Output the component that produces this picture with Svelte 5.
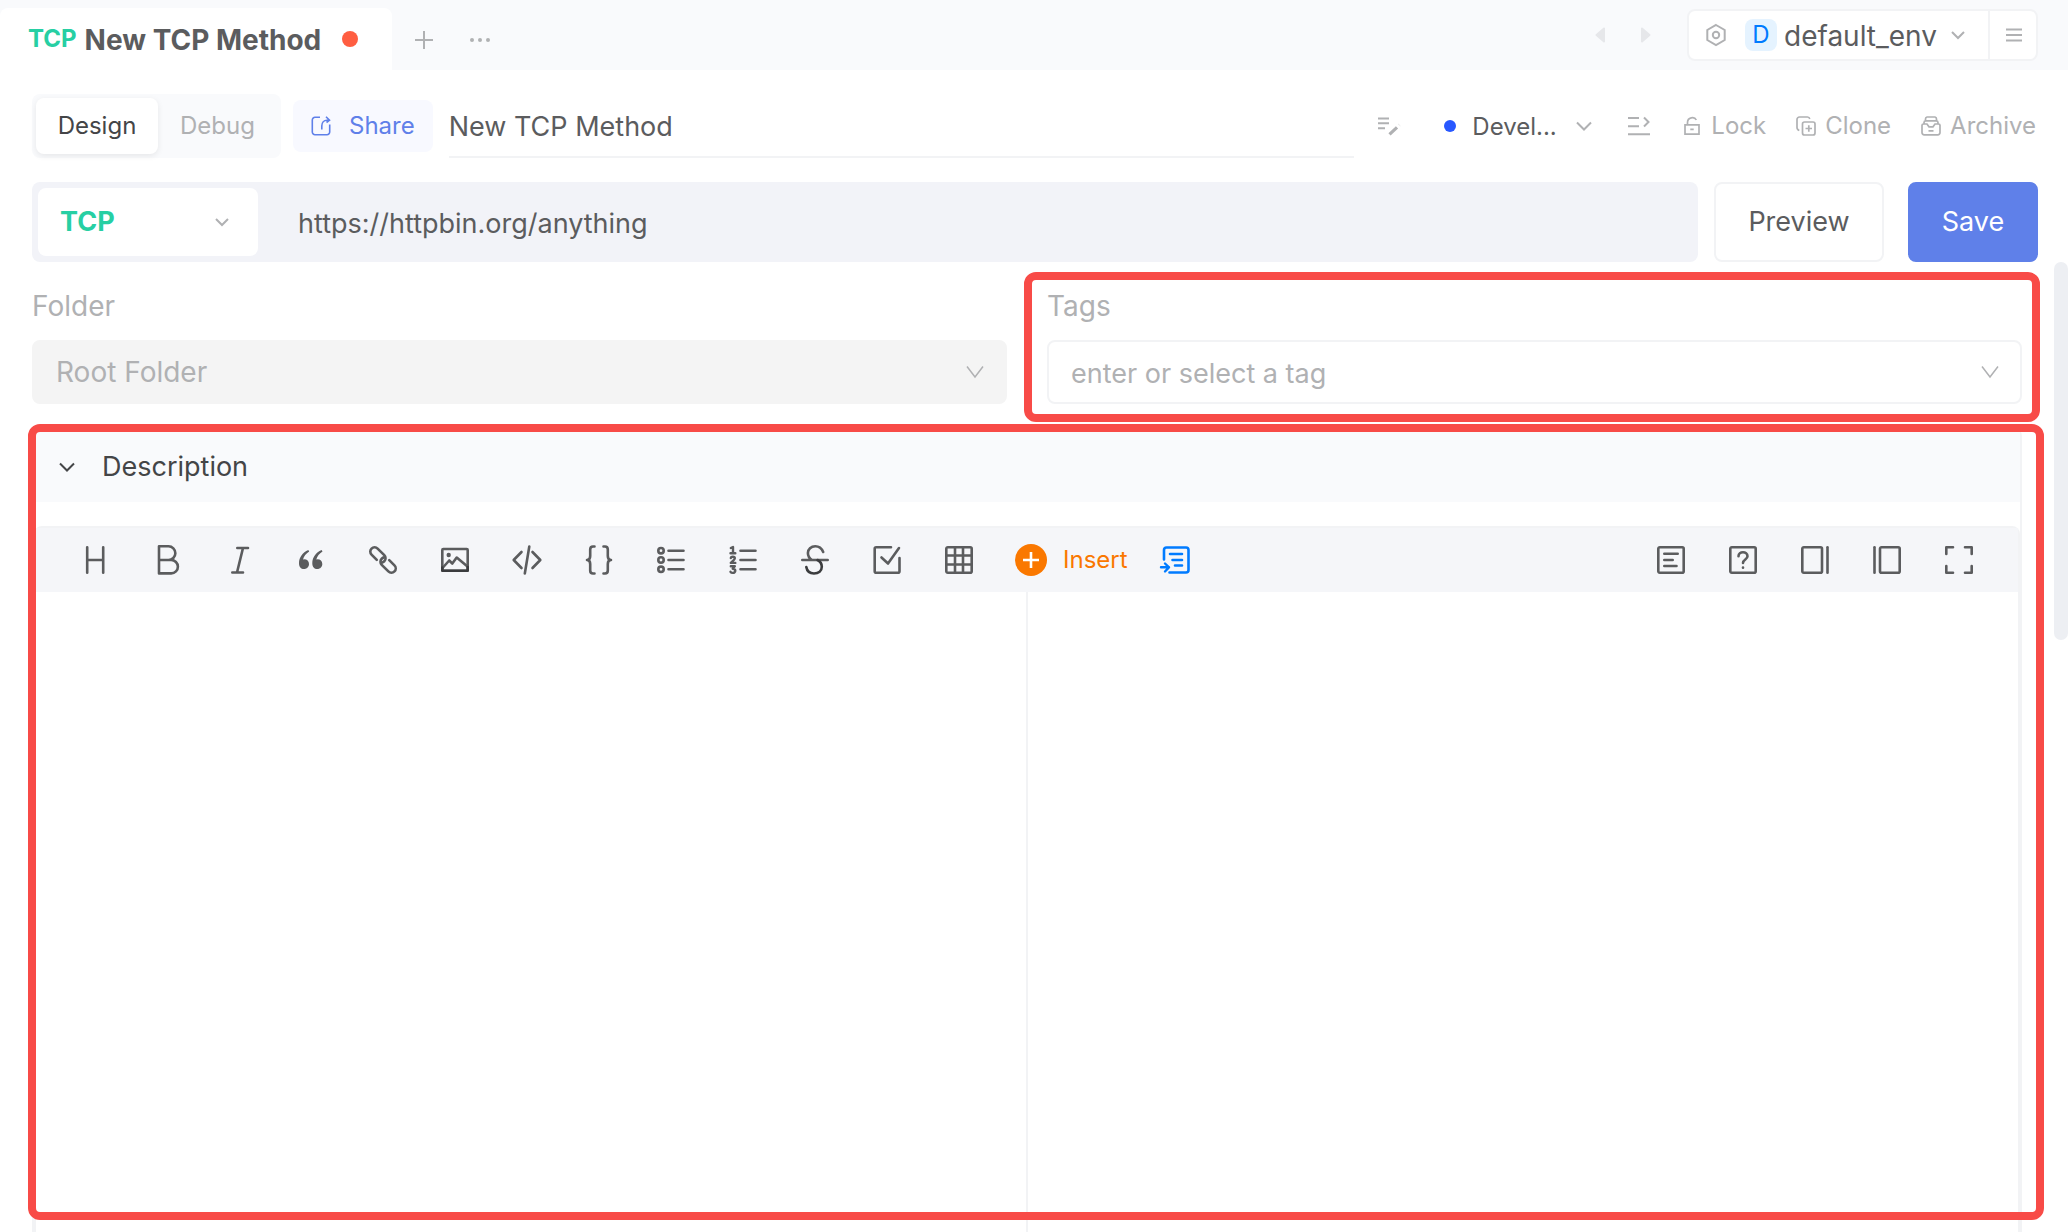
<script lang="ts">
  let mode: string = 'design';
  let name: string = 'New TCP Method';
  let url: string = 'https://httpbin.org/anything';
  let tag: string = '';
  let open: boolean = true;

  const tools = [
    { id: 'heading', label: 'Heading' },
    { id: 'bold', label: 'Bold' },
    { id: 'italic', label: 'Italic' },
    { id: 'quote', label: 'Quote' },
    { id: 'link', label: 'Link' },
    { id: 'image', label: 'Image' },
    { id: 'code', label: 'Code' },
    { id: 'braces', label: 'Code block' },
    { id: 'ul', label: 'Unordered list' },
    { id: 'ol', label: 'Ordered list' },
    { id: 'strike', label: 'Strikethrough' },
    { id: 'task', label: 'Task list' },
    { id: 'table', label: 'Table' },
  ];

  const viewTools = [
    { id: 'toc', label: 'Table of contents' },
    { id: 'help', label: 'Help' },
    { id: 'write', label: 'Write only' },
    { id: 'preview', label: 'Preview only' },
    { id: 'fullscreen', label: 'Fullscreen' },
  ];

  const actions = [
    { id: 'lock', label: 'Lock' },
    { id: 'clone', label: 'Clone' },
    { id: 'archive', label: 'Archive' },
  ];
</script>

<div class="page">
  <header class="tabs">
    <div class="tab">
      <span class="tab-method">TCP</span>
      <span class="tab-name">New TCP Method</span>
      <span class="tab-dot"></span>
    </div>
    <button class="plain tab-add" aria-label="New tab">
      <svg width="20" height="20" viewBox="0 0 20 20"><path d="M10 1V19M1 10H19" /></svg>
    </button>
    <button class="plain tab-more" aria-label="More">
      <svg width="20" height="20" viewBox="0 0 20 20">
        <g fill="currentColor" stroke="none">
          <circle cx="2" cy="10" r="2" /><circle cx="10" cy="10" r="2" /><circle cx="18" cy="10" r="2" />
        </g>
      </svg>
    </button>
    <div class="tabs-right">
      <button class="plain arrow" aria-label="Back">
        <svg width="10" height="16" viewBox="0 0 10 16"><path d="M9 1.5V14.5L1.5 8Z" /></svg>
      </button>
      <button class="plain arrow" aria-label="Forward">
        <svg width="10" height="16" viewBox="0 0 10 16"><path d="M1 1.5V14.5L8.5 8Z" /></svg>
      </button>
      <div class="env">
        <div class="env-main">
          <svg width="20" height="24" viewBox="0 0 20 24">
            <path d="M10 2L18.7 7V17L10 22L1.3 17V7Z" /><circle cx="10" cy="12" r="3.2" />
          </svg>
          <span class="env-badge">D</span>
          <select class="env-select" aria-label="Environment"><option>default_env</option></select>
          <svg class="chevron" width="16" height="10" viewBox="0 0 16 10"><path d="M2 2L8 8L14 2" /></svg>
        </div>
        <button class="plain env-menu" aria-label="Menu">
          <svg width="16" height="14" viewBox="0 0 16 14"><path d="M0 1.5H16M0 7H16M0 12.5H16" /></svg>
        </button>
      </div>
    </div>
  </header>

  <main>
    <div class="row title-row">
      <div class="segment">
        <button class:active={mode === 'design'} on:click={() => (mode = 'design')}>Design</button>
        <button class:active={mode === 'debug'} on:click={() => (mode = 'debug')}>Debug</button>
      </div>
      <button class="share">
        <svg width="20" height="20" viewBox="0 0 20 20">
          <path d="M9 1.3H4A2.7 2.7 0 0 0 1.3 4V16A2.7 2.7 0 0 0 4 18.7H16A2.7 2.7 0 0 0 18.7 16V8.5M10.8 13.5V10C10.8 6.5 13 4.2 16 4.2H18M15 .8L18.5 4.2L15.5 6.5" />
        </svg>
        Share
      </button>
      <input class="name" aria-label="Name" bind:value={name} />
      <button class="plain edit" aria-label="Edit name">
        <svg width="24" height="20" viewBox="0 0 24 20">
          <path d="M1 2.5H12M1 7.3H12M1 12.2H8" />
          <path d="M12.500 18.3L20 11.3M22.3 9.2L22.5 9" stroke-width="3.2" />
        </svg>
      </button>
      <div class="status">
        <span class="status-dot"></span>
        <select class="status-select" aria-label="Status"><option>Devel...</option></select>
        <svg class="chevron" width="18" height="12" viewBox="0 0 18 12"><path d="M2 2.5L9 9.5L16 2.5" /></svg>
      </div>
      <button class="plain sort" aria-label="Sort">
        <svg width="22" height="20" viewBox="0 0 22 20">
          <path d="M0 2H11M0 10.3H11M0 18.3H22M16 1.5L20.5 6L16 10.5" />
        </svg>
      </button>
      <div class="actions">
        {#each actions as action}
          <button class="plain action">
            <svg width="20" height="20" viewBox="0 0 20 20">
              {#if action.id === 'lock'}
                <path d="M3 8.8H17V18.2H3ZM5.5 8.5V6.5C5.5 1.2 12.5 .2 14.3 4M8.3 13.3H11.7" />
              {:else if action.id === 'clone'}
                <rect x="6.5" y="6" width="12.5" height="13" rx="2" />
                <path d="M12.8 9.3V15.7M9.5 12.5H16M3.3 14.5C1.8 14 1 13 1 11.5V3.5A2.5 2.5 0 0 1 3.5 1H11.5C13 1 13.5 1.8 13.8 3" />
              {:else}
                <path d="M4.5 4.8V3A2 2 0 0 1 6 1H14A2 2 0 0 1 15.5 3V4.8M3 8V6.5A1.7 1.7 0 0 1 4.7 4.9H15.3A1.7 1.7 0 0 1 17 6.5V8M1 9.3Q1 8 2.5 8H6L8 10.8H12L14 8H17.5Q19 8 19 9.3V16.5A2.2 2.2 0 0 1 16.8 18.8H3.2A2.2 2.2 0 0 1 1 16.5ZM7.5 14.8H12.5" />
              {/if}
            </svg>
            {action.label}
          </button>
        {/each}
      </div>
    </div>

    <div class="row url-row">
      <div class="url-bar">
        <div class="method">
          <select aria-label="Method"><option>TCP</option></select>
          <svg class="chevron" width="16" height="10" viewBox="0 0 16 10"><path d="M2 2L8 8L14 2" /></svg>
        </div>
        <input class="url" aria-label="URL" bind:value={url} />
      </div>
      <button class="btn">Preview</button>
      <button class="btn btn-save">Save</button>
    </div>

    <div class="fields">
      <div class="field">
        <label for="folder">Folder</label>
        <div class="box box-disabled">
          <select id="folder" disabled><option>Root Folder</option></select>
          <svg class="chevron thin" width="18" height="14" viewBox="0 0 18 14"><path d="M1 1.5L9 12L17 1.5" /></svg>
        </div>
      </div>
      <div class="field marked">
        <label for="tags">Tags</label>
        <div class="box">
          <input id="tags" placeholder="enter or select a tag" bind:value={tag} />
          <svg class="chevron thin" width="18" height="14" viewBox="0 0 18 14"><path d="M1 1.5L9 12L17 1.5" /></svg>
        </div>
      </div>
    </div>

    <section class="panel marked">
      <button class="panel-head" aria-expanded={open} on:click={() => (open = !open)}>
        <svg width="18" height="12" viewBox="0 0 18 12"><path d="M2 2.5L9 9.5L16 2.5" /></svg>
        Description
      </button>
      {#if open}
        <div class="editor">
          <div class="toolbar">
            {#each tools as tool}
              <button class="plain tool" aria-label={tool.label}>
                <svg width="32" height="32" viewBox="0 0 32 32">
                  {#if tool.id === 'heading'}
                    <path d="M8.2 3.3V28.7M24.2 3.3V28.7M8.2 16H24.2" />
                  {:else if tool.id === 'bold'}
                    <path d="M8 2.3H17.5A6.8 6.8 0 0 1 17.5 16H8ZM8 16H20.2A6.7 6.7 0 0 1 20.2 29.4H8Z" />
                  {:else if tool.id === 'italic'}
                    <path d="M14.3 4H25M9.3 28.5H20M20 4L14 28.5" />
                  {:else if tool.id === 'quote'}
                    <g fill="currentColor" stroke="none">
                      <path d="M13.3 6C7.5 8.5 4 13.5 4 19.2C4 22.8 6 25 9 25S14 22.8 14 20S12 15.2 9.2 15.2L8 15.4C8.8 12.3 11 9.4 14.2 7.4Z" />
                      <path d="M26.6 6C20.8 8.5 17.3 13.5 17.3 19.2C17.3 22.8 19.3 25 22.3 25S27.3 22.8 27.3 20S25.3 15.2 22.5 15.2L21.3 15.4C22.1 12.3 24.3 9.4 27.5 7.4Z" />
                    </g>
                  {:else if tool.id === 'link'}
                    <g transform="rotate(45 16 16)">
                      <path d="M11.5 20.3H4.1A4.3 4.3 0 0 1 4.1 11.7H13.5A4.3 4.3 0 0 1 17.8 16Q17.8 17.5 17 18.7" />
                      <path d="M20.5 11.7H27.9A4.3 4.3 0 0 1 27.9 20.3H18.5A4.3 4.3 0 0 1 14.2 16Q14.2 14.5 15 13.3" />
                    </g>
                  {:else if tool.id === 'image'}
                    <rect x="3.3" y="5" width="25.4" height="21.7" rx="1" />
                    <path d="M3.5 24L10.2 16.5L13.3 19.5L17.7 13.5L28.5 22.5" />
                    <circle cx="9.7" cy="11" r="2.2" fill="currentColor" stroke="none" />
                    <path class="dark" d="M3.3 23.5V26.7H28.7V23" />
                  {:else if tool.id === 'code'}
                    <path d="M10.5 8L2.7 16L10.5 24M21.5 8L29.3 16L21.5 24M18.3 2.5L13.8 29.5" />
                  {:else if tool.id === 'braces'}
                    <path d="M11.5 2.5H10Q7.2 2.5 7.2 5.5V12Q7.2 16 4 16Q7.2 16 7.2 20V26.5Q7.2 29.5 10 29.5H11.5M20.5 2.5H22Q24.8 2.5 24.8 5.5V12Q24.8 16 28 16Q24.8 16 24.8 20V26.5Q24.8 29.5 22 29.5H20.5" />
                  {:else if tool.id === 'ul'}
                    <circle cx="6" cy="6.7" r="2.7" /><circle cx="6" cy="16" r="2.7" /><circle cx="6" cy="25.3" r="2.7" />
                    <path d="M13.5 6.7H28.5M13.5 16H28.5M13.5 25.3H28.5" />
                  {:else if tool.id === 'ol'}
                    <path d="M13.5 6.7H28.5M13.5 16H28.5M13.5 25.3H28.5" />
                    <g stroke-width="2.4">
                      <path d="M3.8 4L6 3V9M3.5 9.3H8.3" />
                      <path d="M3.8 14Q4 12.7 5.8 12.7Q7.8 12.7 7.8 14.3Q7.8 15.5 3.8 18.9H8.3" />
                      <path d="M3.8 22.2H7.8L5.7 24.7Q8.3 25 8.3 26.8Q8 28.9 5.8 28.9Q4.2 28.9 3.5 27.8" />
                    </g>
                  {:else if tool.id === 'strike'}
                    <path d="M3.3 16H28.7M24.2 8C22.7 4.5 19.7 2.3 16.3 2.3C12 2.3 8.9 5.2 8.9 9C8.9 12 10.5 14.5 13 16" />
                    <path class="dark" d="M7.3 23C8 27 11 29.5 15 29.5C19.5 29.5 22.8 26.8 22.8 22.8C22.8 19.5 21 17.3 18.5 16" />
                  {:else if tool.id === 'task'}
                    <path d="M20 3.3H5.2Q3.7 3.3 3.7 4.8V27.2Q3.7 28.7 5.2 28.7H27Q28.5 28.7 28.5 27.2V14M10.5 13.5L17 19.5L28 4" />
                  {:else}
                    <rect x="3.3" y="3.3" width="25.4" height="25.4" rx="1.5" />
                    <path d="M12 3.3V28.7M20 3.3V28.7M3.3 11.5H28.7M3.3 20.5H28.7" />
                  {/if}
                </svg>
              </button>
            {/each}
            <button class="plain insert">
              <svg width="32" height="32" viewBox="0 0 32 32">
                <circle cx="16" cy="16" r="16" fill="#fa7800" stroke="none" />
                <path d="M16 8V24M8 16H24" stroke="#fff" stroke-linecap="butt" />
              </svg>
              Insert
            </button>
            <button class="plain template" aria-label="Insert template">
              <svg width="32" height="32" viewBox="0 0 32 32">
                <path d="M5 15.5V6Q5 3.5 7.5 3.5H27Q29.5 3.5 29.5 6V26Q29.5 28.5 27 28.5H10.5M11 10H23M13.5 16H23M16 21.5H23" />
                <path d="M2 23.3H10M6 19.5L10 23.3L6 27.5" stroke-width="2.4" />
              </svg>
            </button>
            <div class="view-tools">
              {#each viewTools as tool}
                <button class="plain tool" aria-label={tool.label}>
                  <svg width="32" height="32" viewBox="0 0 32 32">
                    {#if tool.id === 'toc'}
                      <rect x="3.3" y="3.3" width="25.4" height="25.4" rx="1.5" />
                      <path d="M9.3 9.7H22.7M9.3 16H17.7M9.3 22H21.5" />
                    {:else if tool.id === 'help'}
                      <rect x="3.3" y="3.3" width="25.4" height="25.4" rx="1.5" />
                      <path d="M11.5 12.3C11.5 6.8 20.5 6.8 20.5 12.3C20.5 15.5 16 15.5 16 19M16 23.6V23.7" />
                    {:else if tool.id === 'write'}
                      <rect x="3.3" y="3.3" width="19.7" height="25.4" rx="1.5" />
                      <path d="M28.5 3.3V28.7" />
                    {:else if tool.id === 'preview'}
                      <rect x="9" y="3.3" width="19.7" height="25.4" rx="1.5" />
                      <path d="M3.5 3.3V28.7" />
                    {:else}
                      <path d="M10 3.3H3.3V10M22 3.3H28.7V10M10 28.7H3.3V22M22 28.7H28.7V22" />
                    {/if}
                  </svg>
                </button>
              {/each}
            </div>
          </div>
          <div class="panes">
            <textarea aria-label="Description"></textarea>
            <div class="preview"></div>
          </div>
        </div>
      {/if}
    </section>
  </main>
  <div class="scrollbar"></div>
</div>

<style>
  :global(body) {
    overflow: hidden;
  }

  .page {
    position: relative;
    box-sizing: border-box;
    height: 100vh;
    display: flex;
    flex-direction: column;
    overflow: hidden;
    background-color: #fff;
    color: #5b5c5e;
    font-family: Inter, 'Liberation Sans', sans-serif;
    font-size: 28px;
    line-height: 36px;
  }

  svg {
    flex: none;
    display: block;
    fill: none;
    stroke: currentColor;
    stroke-width: 2;
  }

  button,
  input,
  select,
  textarea {
    box-sizing: border-box;
    margin: 0;
    padding: 0;
    border: none;
    outline: none;
    background: none;
    color: inherit;
    font: inherit;
  }
  select {
    appearance: none;
    opacity: 1;
  }
  button {
    cursor: pointer;
  }

  .plain {
    display: flex;
    align-items: center;
    color: #b0b1b3;
  }
  .chevron {
    color: #b0b1b3;
    pointer-events: none;
  }
  .thin {
    stroke-width: 1.5;
  }

  .tabs {
    flex: none;
    display: flex;
    align-items: stretch;
    height: 70px;
    background-color: #f9fafc;
  }
  .tab {
    display: flex;
    align-items: center;
    margin-top: 8px;
    padding: 0 34px 0 28px;
    border-radius: 8px 8px 0 0;
    background-color: #fff;
    font-weight: 700;
  }
  .tab-method {
    margin-right: 8px;
    color: #27cfa3;
    font-size: 24px;
  }
  .tab-name {
    padding-top: 2px;
  }
  .tab-dot {
    width: 16px;
    height: 16px;
    margin-left: 21px;
    border-radius: 50%;
    background-color: #ff5e41;
  }
  .tab-add {
    margin-left: 22px;
    padding-top: 10px;
  }
  .tab-more {
    margin-left: 36px;
    padding-top: 10px;
  }
  .tabs-right {
    display: flex;
    align-items: center;
    margin-left: auto;
    padding-right: 30px;
  }
  .arrow {
    margin-right: 36px;
    color: #e6e7ea;
  }
  .arrow svg {
    fill: currentColor;
    stroke-linejoin: round;
  }
  .env {
    display: flex;
    border: 2px solid #f2f3f5;
    border-radius: 8px;
    background-color: #fff;
  }
  .env-main {
    display: flex;
    align-items: center;
    height: 48px;
    padding: 0 22px 0 17px;
  }
  .env-main svg {
    color: #b0b1b3;
  }
  .env-badge {
    width: 32px;
    margin: 0 7px 0 19px;
    border-radius: 8px;
    background-color: #e5f3ff;
    color: #007bff;
    font-size: 24px;
    line-height: 32px;
    text-align: center;
  }
  .env-select {
    width: 166px;
    padding-top: 2px;
  }
  .env-menu {
    padding: 0 14px 0 16px;
    border-left: 2px solid #f2f3f5;
  }

  main {
    flex: 1;
    display: flex;
    flex-direction: column;
    min-height: 0;
    padding: 24px 30px 0 32px;
  }
  .row {
    display: flex;
    align-items: center;
  }

  .title-row {
    height: 64px;
    padding-right: 2px;
    font-size: 24px;
  }
  .segment {
    display: flex;
    padding: 4px;
    border-radius: 8px;
    background-color: #f9fafc;
  }
  .segment button {
    width: 122px;
    height: 56px;
    border-radius: 8px;
    color: #b0b1b3;
  }
  .segment button:last-child {
    width: 119px;
  }
  .segment .active {
    background-color: #fff;
    color: #444547;
    box-shadow: 0 2px 6px rgb(0 0 0 / 0.08);
  }
  .share {
    display: flex;
    align-items: center;
    gap: 18px;
    height: 52px;
    margin: 0 16px 0 12px;
    padding: 0 18px;
    border-radius: 8px;
    background-color: #f8f9ff;
    color: #5f80e9;
  }
  .share svg {
    stroke-width: 1.6;
  }
  .name {
    flex: 1;
    min-width: 0;
    height: 64px;
    padding-top: 2px;
    border-bottom: 2px solid #f2f3f5;
    font-size: 27px;
  }
  .edit {
    margin: 0 43px 0 23px;
  }
  .status {
    display: flex;
    align-items: center;
  }
  .status-dot {
    width: 12px;
    height: 12px;
    margin-right: 16px;
    border-radius: 50%;
    background-color: #2858ff;
  }
  .status-select {
    width: 103px;
    padding-top: 2px;
  }
  .sort {
    margin: 0 32px 0 35px;
  }
  .actions {
    display: flex;
    gap: 30px;
  }
  .action {
    gap: 9px;
  }
  .action svg {
    stroke-width: 1.7;
  }

  .url-row {
    height: 80px;
    margin-top: 24px;
    font-size: 27px;
  }
  .url-bar {
    flex: 1;
    display: flex;
    align-items: center;
    gap: 40px;
    height: 80px;
    padding: 0 6px;
    box-sizing: border-box;
    border-radius: 8px;
    background-color: #f2f3f8;
  }
  .method {
    display: flex;
    align-items: center;
    box-sizing: border-box;
    width: 220px;
    height: 68px;
    padding: 0 28px 0 22px;
    border-radius: 8px;
    background-color: #fff;
    color: #27cfa3;
    font-weight: 700;
  }
  .method select {
    flex: 1;
  }
  .url {
    flex: 1;
    height: 68px;
    padding-top: 2px;
  }
  .btn {
    height: 80px;
    width: 170px;
    margin-left: 16px;
    border: 2px solid #f2f3f5;
    border-radius: 8px;
    background-color: #fff;
  }
  .btn-save {
    width: 130px;
    margin-left: 24px;
    border-color: #5f80e9;
    background-color: #5f80e9;
    color: #fff;
  }

  .fields {
    display: flex;
    gap: 40px;
    padding: 26px 16px 0 0;
  }
  .field {
    flex: 1;
    color: #b0b1b3;
  }
  .field label {
    display: block;
  }
  .box {
    display: flex;
    align-items: center;
    box-sizing: border-box;
    height: 64px;
    margin-top: 16px;
    padding: 0 21px 0 22px;
    border: 2px solid #f2f3f5;
    border-radius: 8px;
  }
  .box select,
  .box input {
    flex: 1;
    height: 60px;
  }
  .box input {
    padding-top: 2px;
    font-size: 27px;
  }
  .box input::placeholder {
    color: #b0b1b3;
    opacity: 1;
  }
  .box-disabled {
    border-color: #f4f4f4;
    background-color: #f4f4f4;
  }

  /* red callout frames */
  .marked {
    position: relative;
  }
  .marked::after {
    content: '';
    position: absolute;
    inset: -16px -18px -18px -23px;
    border: 8px solid #f84b47;
    border-radius: 12px;
    pointer-events: none;
  }
  .panel.marked::after {
    inset: -4px -24px 12px -6px;
  }

  .panel {
    flex: 1;
    display: flex;
    flex-direction: column;
    min-height: 0;
    margin: 24px 16px 0 0;
    border: 2px solid #f2f3f5;
    border-width: 0 2px;
    border-radius: 8px 8px 0 0;
  }
  .panel-head {
    display: flex;
    align-items: center;
    gap: 26px;
    height: 74px;
    padding: 4px 0 0 24px;
    background-color: #f9fafc;
    color: #444547;
    font-size: 27px;
  }
  .editor {
    flex: 1;
    display: flex;
    flex-direction: column;
    margin-top: 24px;
    border: 2px solid #f2f3f5;
    border-bottom: none;
    border-radius: 8px 8px 0 0;
  }
  .toolbar {
    display: flex;
    align-items: center;
    height: 64px;
    padding: 0 23px;
    background-color: #f5f6f9;
  }
  .toolbar svg {
    stroke-width: 2.6;
    stroke-linecap: round;
    stroke-linejoin: round;
  }
  .tool {
    justify-content: center;
    width: 72px;
    height: 64px;
    color: #5b5c5e;
  }
  .dark {
    stroke: #3b3c3e;
  }
  .insert {
    gap: 16px;
    margin-left: 20px;
    color: #fa7800;
    font-size: 24px;
  }
  .template {
    margin-left: 31px;
    color: #007bff;
  }
  .view-tools {
    display: flex;
    margin-left: auto;
  }
  .panes {
    flex: 1;
    display: flex;
  }
  .panes textarea {
    flex: 1;
    min-width: 0;
    border-right: 2px solid #f2f3f5;
    resize: none;
  }
  .preview {
    flex: 1;
  }

  .scrollbar {
    position: absolute;
    top: 262px;
    right: 0;
    width: 14px;
    height: 378px;
    border-radius: 8px;
    background-color: #edeff3;
  }
</style>
